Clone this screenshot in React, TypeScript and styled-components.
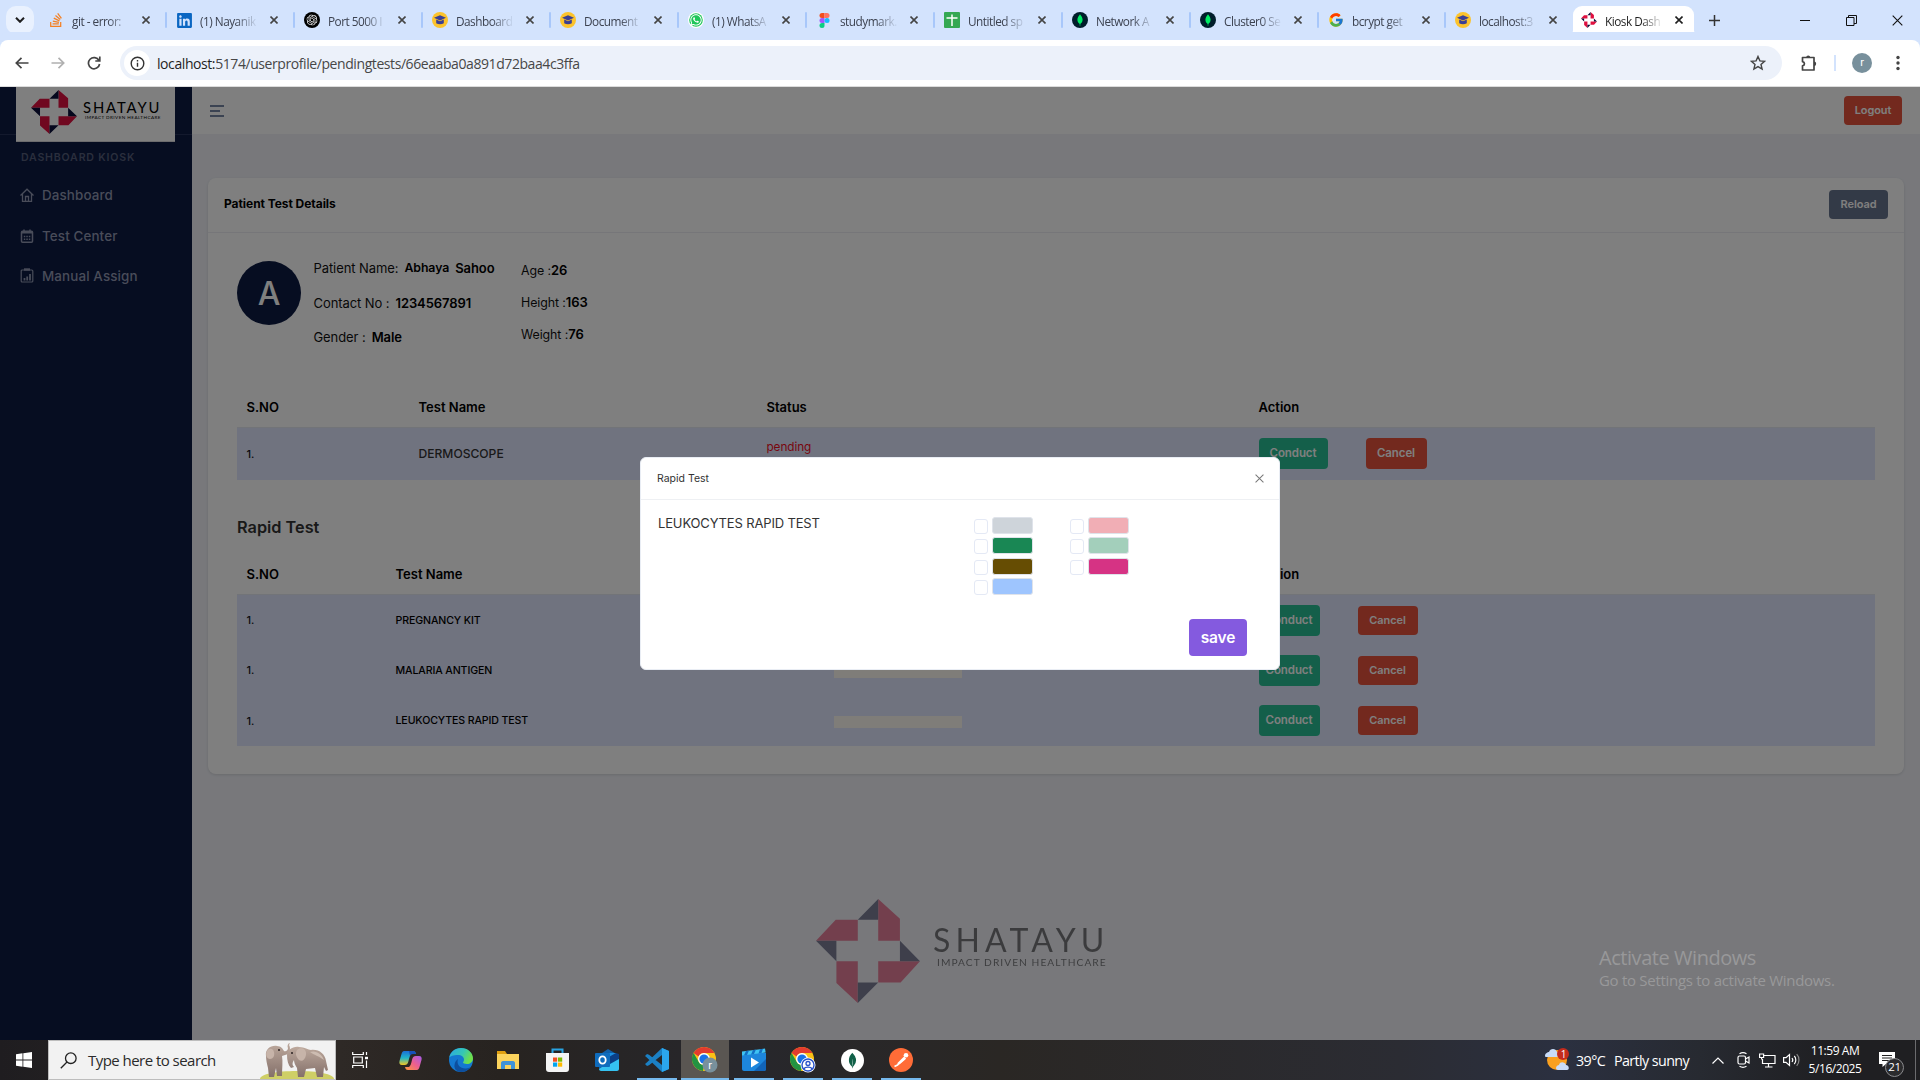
import React from "react";
import styled, { createGlobalStyle, css } from "styled-components";
import { FcGoogle } from "react-icons/fc";
import { FaLinkedin, FaWhatsapp, FaStackOverflow } from "react-icons/fa";
import { SiOpenai, SiMongodb } from "react-icons/si";

const ui = `Inter, "Liberation Sans", sans-serif`;
const sys = `"Open Sans", "Noto Sans", sans-serif`;

const Global = createGlobalStyle`
  *, *::before, *::after { box-sizing: border-box; }
  body { margin: 0; overflow: hidden; font-family: ${ui}; }
  svg { display: block; flex: none; }
`;

const Screen = styled.div`
  width: 1920px;
  height: 1080px;
  display: flex;
  flex-direction: column;
  overflow: hidden;
  background: #fff;
`;

/* ---------- browser chrome ---------- */

const TabStrip = styled.div`
  height: 40px;
  flex: none;
  display: flex;
  background: #d3e3fd;
  font-family: ${sys};
`;
const TabSearch = styled.div`
  width: 28px;
  height: 28px;
  margin: 6px 5px 0 6px;
  border-radius: 10px;
  background: #e9f1fe;
  display: grid;
  place-items: center;
`;
const Tab = styled.div<{ $w?: number; $sep?: boolean }>`
  width: ${(p) => p.$w ?? 128}px;
  height: 40px;
  display: flex;
  align-items: center;
  padding-left: 9px;
  &::after {
    content: "";
    width: 2px;
    height: 16px;
    margin-left: auto;
    border-radius: 1px;
    background: ${(p) => (p.$sep ? "#a8c7fa" : "transparent")};
  }
`;
const ActiveTab = styled.div`
  position: relative;
  width: 121px;
  height: 34px;
  margin-top: 6px;
  padding-left: 8px;
  padding-bottom: 6px;
  display: flex;
  align-items: center;
  background: #fff;
  border-radius: 9px 9px 0 0;
  &::before,
  &::after {
    content: "";
    position: absolute;
    bottom: 0;
    width: 10px;
    height: 10px;
  }
  &::before {
    left: -10px;
    background: radial-gradient(circle at 0 0, transparent 9.5px, #fff 10px);
  }
  &::after {
    right: -10px;
    background: radial-gradient(circle at 100% 0, transparent 9.5px, #fff 10px);
  }
`;
const Fav = styled.div`
  width: 16px;
  height: 16px;
  flex: none;
  display: grid;
  place-items: center;
`;
const TabLabel = styled.div<{ $active?: boolean }>`
  width: 60px;
  margin-left: 8px;
  padding-top: 1px;
  white-space: nowrap;
  font-size: 11.8px;
  line-height: 18px;
  letter-spacing: -0.5px;
  color: ${(p) => (p.$active ? "#1f1f1f" : "#3c4250")};
  mask-image: linear-gradient(90deg, #000 36px, transparent 58px);
`;
const CloseSlot = styled.div`
  width: 10px;
  margin-left: 10px;
`;
const NewTab = styled.div`
  width: 40px;
  display: grid;
  place-items: center;
`;
const WinButtons = styled.div`
  margin-left: auto;
  display: flex;
`;
const WinButton = styled.div`
  width: 46px;
  display: grid;
  place-items: center;
`;
const Toolbar = styled.div`
  height: 47px;
  flex: none;
  display: flex;
  align-items: center;
  border-radius: 8px 8px 0 0;
  border-bottom: 1px solid #dcdcdc;
  background: #fff;
  box-shadow: 0 -8px 0 #d3e3fd;
  z-index: 0;
`;
const NavIcon = styled.div`
  width: 36px;
  display: grid;
  place-items: center;
`;
const NavIcons = styled.div`
  width: 120px;
  padding-left: 4px;
  display: flex;
`;
const Omnibox = styled.div`
  width: 1662px;
  height: 34px;
  border-radius: 17px;
  padding: 0 16px 0 4px;
  display: flex;
  align-items: center;
  background: #ecf1fa;
`;
const InfoDisc = styled.div`
  width: 26px;
  height: 26px;
  border-radius: 50%;
  display: grid;
  place-items: center;
  background: #fff;
`;
const Url = styled.div`
  margin-left: 7px;
  flex: 1;
  font-family: ${sys};
  font-size: 14px;
  letter-spacing: -0.42px;
  color: #474747;
  b {
    font-weight: 400;
    color: #1f1f1f;
  }
`;
const ToolIcons = styled.div`
  display: flex;
  align-items: center;
  padding-left: 18px;
`;
const ToolSep = styled.div`
  width: 2px;
  height: 16px;
  margin: 0 16px 0 16px;
  background: #d3e3fd;
`;
const Profile = styled.div`
  width: 20px;
  height: 20px;
  margin-right: 24px;
  border-radius: 50%;
  display: grid;
  place-items: center;
  background: #78909c;
  color: #fff;
  font: 11px/18px Roboto, sans-serif;
`;

/* ---------- application ---------- */

const Page = styled.div`
  position: relative;
  height: 953px;
  flex: none;
  display: flex;
  background: #f0f1f7;
  overflow: hidden;
`;
const Sidebar = styled.div`
  width: 192px;
  flex: none;
  background: #0c1a42;
`;
const SideHead = styled.div`
  height: 47.5px;
  padding: 0 16px;
  border-bottom: 1px solid #26335a;
`;
const SideLogo = styled.div`
  position: relative;
  width: 159px;
  height: 54.5px;
  padding: 3px 0 0 15px;
  display: flex;
  background: #fff;
  border-bottom: 1px solid #d8d9dd;
`;
const SideCaption = styled.div`
  padding: 15px 0 0 21px;
  height: 46px;
  font-size: 10.6px;
  line-height: 16px;
  font-weight: 600;
  letter-spacing: 0.8px;
  color: #555e7b;
`;
const SideItem = styled.div`
  height: 40.4px;
  display: flex;
  align-items: center;
  gap: 8px;
  padding-left: 20px;
  font-size: 13.4px;
  font-weight: 500;
  letter-spacing: 0.12px;
  color: #9299b3;
`;
const SideItems = styled.div`
  padding-top: 0;
  margin-top: -5.5px;
`;
const Main = styled.div`
  flex: 1;
  display: flex;
  flex-direction: column;
`;
const TopBar = styled.div`
  height: 47px;
  display: flex;
  align-items: center;
  justify-content: space-between;
  padding: 0 18px 0 18px;
  background: #fff;
`;
const Button = styled.div<{ $bg: string; $w: number; $h?: number; $fs?: number; $ml?: number }>`
  width: ${(p) => p.$w}px;
  height: ${(p) => p.$h ?? 29}px;
  margin-left: ${(p) => p.$ml ?? 0}px;
  padding-bottom: 1px;
  border-radius: 4px;
  display: grid;
  place-items: center;
  background: ${(p) => p.$bg};
  color: #fff;
  font-size: ${(p) => p.$fs ?? 11}px;
  font-weight: 600;
  letter-spacing: -0.1px;
`;
const Card = styled.div`
  width: 1696px;
  height: 596px;
  margin: 44px 0 0 16px;
  border-radius: 8px;
  background: #fff;
  box-shadow: 0 1px 3px rgba(0, 0, 0, 0.12);
`;
const CardHead = styled.div`
  height: 55px;
  display: flex;
  align-items: center;
  justify-content: space-between;
  padding: 0 16px 2px;
  border-bottom: 1px solid #ededf2;
  font-size: 12px;
  font-weight: 700;
  letter-spacing: -0.05px;
  color: #000;
  > span {
    padding-bottom: 2px;
  }
`;
const CardBody = styled.div`
  padding: 28px 29px 0;
`;
const Patient = styled.div`
  height: 121px;
  display: flex;
`;
const Avatar = styled.div`
  width: 64px;
  height: 64px;
  border-radius: 50%;
  display: grid;
  place-items: center;
  background: #0c1a42;
  color: #fff;
  font-size: 32px;
  font-weight: 500;
`;
const Facts = styled.div<{ $w: number; $ml: number; $row: number; $gap: number; $fs: number; $top: number }>`
  width: ${(p) => p.$w}px;
  margin: ${(p) => p.$top}px 0 0 ${(p) => p.$ml}px;
  display: grid;
  grid-auto-rows: ${(p) => p.$row}px;
  align-content: start;
  font-size: ${(p) => p.$fs}px;
  letter-spacing: -0.08px;
  color: #111;
  > div {
    display: flex;
    align-items: center;
    gap: ${(p) => p.$gap}px;
  }
  b {
    font-weight: 600;
    font-size: 13px;
    color: #000;
  }
  b.first {
    font-size: 12.3px;
    padding-bottom: 1px;
  }
`;
const cols = css<{ $cols: string }>`
  display: grid;
  grid-template-columns: ${(p) => p.$cols};
  align-items: center;
  padding-left: 9.5px;
`;
const HeadRow = styled.div<{ $cols: string; $h: number; $pt: number }>`
  ${cols}
  height: ${(p) => p.$h}px;
  padding-top: ${(p) => p.$pt}px;
  font-size: 13px;
  font-weight: 600;
  color: #000;
  border-bottom: 1px solid #e4e8f0;
`;
const Row = styled.div<{ $cols: string; $h: number; $fs: number }>`
  ${cols}
  height: ${(p) => p.$h}px;
  font-size: ${(p) => p.$fs}px;
  font-weight: 500;
  color: #15171c;
  background: #e0e6ff;
`;
const TestName = styled.div`
  font-size: 12.1px;
  padding-bottom: 1px;
  color: #333;
`;
const Small = styled.div`
  font-size: 10.6px;
  letter-spacing: -0.12px;
  color: #000;
`;
const Pending = styled.div`
  padding-bottom: 13px;
  font-size: 11.8px;
  letter-spacing: -0.1px;
  font-weight: 400;
  color: #f00d1c;
`;
const Actions = styled.div`
  display: flex;
  align-items: center;
`;
const SectionTitle = styled.div`
  height: 66px;
  padding: 35px 0 0;
  font-size: 16.3px;
  line-height: 24px;
  font-weight: 600;
  color: #333;
`;
const Meter = styled.div`
  width: 128px;
  height: 12px;
  margin: 3px 0 0 38px;
  background: #fffaf2;
`;
const Brand = styled.div`
  display: flex;
  margin: 124.5px 0 0 624px;
  opacity: 0.5;
`;
const BrandText = styled.div<{ $size: number; $ls: number; $sub: number; $subLs: number; $ml: number; $mt: number; $gap: number; $indent: number }>`
  margin: ${(p) => p.$mt}px 0 0 ${(p) => p.$ml}px;
  display: flex;
  flex-direction: column;
  gap: ${(p) => p.$gap}px;
  font-family: Lato, sans-serif;
  color: #000;
  white-space: nowrap;
  font-size: ${(p) => p.$size}px;
  line-height: 1;
  letter-spacing: ${(p) => p.$ls}px;
  small {
    font-size: ${(p) => p.$sub}px;
    line-height: 1;
    padding-left: ${(p) => p.$indent}px;
    letter-spacing: ${(p) => p.$subLs}px;
  }
`;

/* ---------- modal ---------- */

const Backdrop = styled.div`
  position: absolute;
  inset: 0;
  background: rgba(0, 0, 0, 0.5);
`;
const Modal = styled.div`
  position: absolute;
  left: 640px;
  top: 370px;
  width: 640px;
  height: 213px;
  border-radius: 6px;
  background: #fff;
  border: 1px solid #e9edf4;
`;
const ModalHead = styled.div`
  height: 42px;
  display: flex;
  align-items: center;
  justify-content: space-between;
  padding: 0 15.5px 1px 16px;
  border-bottom: 1px solid #eef0f3;
  font-size: 10.5px;
  color: #333;
`;
const ModalBody = styled.div`
  height: 119px;
  display: grid;
  grid-template-columns: 316px 96px 1fr;
  padding: 16px 0 0 17px;
  font-size: 13px;
  color: #333;
`;
const ModalName = styled.div`
  margin-top: -1px;
  line-height: 16px;
  letter-spacing: -0.15px;
`;
const Choices = styled.div`
  display: grid;
  grid-auto-rows: 20.5px;
  align-content: start;
`;
const Choice = styled.label`
  display: flex;
  align-items: flex-start;
  gap: 4px;
`;
const Check = styled.span`
  width: 14px;
  height: 15px;
  margin-top: 2.7px;
  border: 1px solid #e4e9f5;
  border-radius: 3px;
`;
const Swatch = styled.span<{ $c: string }>`
  width: 40.5px;
  height: 17px;
  margin-top: 0.6px;
  border: 1px solid #dfe3ea;
  border-radius: 3px;
  background: ${(p) => p.$c};
`;
const ModalFoot = styled.div`
  display: flex;
  justify-content: flex-end;
  padding-right: 32px;
`;
const Watermark = styled.div`
  position: absolute;
  left: 1599px;
  top: 857px;
  font-family: ${sys};
  color: #98989a;
  white-space: nowrap;
  font-size: 20px;
  line-height: 28px;
  letter-spacing: -0.45px;
  small {
    display: block;
    margin-top: -1px;
    font-size: 15px;
    line-height: 18px;
    letter-spacing: -0.29px;
  }
`;

/* ---------- taskbar ---------- */

const Taskbar = styled.div`
  height: 40px;
  flex: none;
  display: flex;
  background: linear-gradient(90deg, #1f1d20 0, #2e2926 340px, #272320 500px, #27272c 740px, #2a2724 1000px, #2b2c33 1400px, #2b3040 1560px, #272a31 1700px, #1f1f22 1830px, #1f1f22);
  color: #fff;
  font-family: ${sys};
`;
const StartSlot = styled.div`
  width: 48px;
  display: grid;
  place-items: center;
`;
const SearchBox = styled.div`
  width: 288px;
  height: 40px;
  display: flex;
  align-items: center;
  padding-left: 11px;
  border: 1px solid #bdbdbd;
  background: #f2f2f2;
  color: #2b2b2b;
  font-size: 15px;
  letter-spacing: -0.54px;
  > span {
    width: 171px;
    margin-left: 11px;
  }
`;
const TaskSlot = styled.div<{ $w?: number; $active?: boolean; $line?: boolean }>`
  width: ${(p) => p.$w ?? 49}px;
  height: 40px;
  display: grid;
  place-items: center;
  background: ${(p) =>
    p.$line
      ? `linear-gradient(#76b9ed, #76b9ed) center bottom / ${p.$active ? "100%" : "40px"} 2px no-repeat${p.$active ? ", #5a5652" : ""}`
      : "none"};
`;
const Tray = styled.div`
  margin-left: auto;
  display: flex;
  align-items: center;
  font-size: 14.3px;
`;
const Temp = styled.div<{ $w: number; $ls: number }>`
  width: ${(p) => p.$w}px;
  letter-spacing: ${(p) => p.$ls}px;
  white-space: nowrap;
`;
const TrayIcon = styled.div<{ $w: number }>`
  width: ${(p) => p.$w}px;
  display: grid;
  place-items: center;
`;
const Clock = styled.div`
  width: 64px;
  padding-right: 6px;
  text-align: center;
  font-size: 12px;
  line-height: 18px;
  letter-spacing: -0.45px;
  white-space: nowrap;
`;
const Badge = styled.div`
  position: relative;
  width: 46px;
  height: 40px;
  margin-right: 4px;
  border-right: 1px solid #6b6b6e;
  > svg {
    margin: 11px 0 0 9px;
  }
  > span {
    position: absolute;
    left: 15px;
    top: 18px;
    width: 19px;
    height: 19px;
    border-radius: 50%;
    border: 1px solid #8b8b8e;
    background: #2b2b2d;
    font-size: 11.5px;
    line-height: 16px;
    text-align: center;
    letter-spacing: -0.4px;
  }
`;

/* ---------- drawings ---------- */

const Mark = ({ w, h = w, red = "#e01040", navy = "#0a0f3a" }: { w: number; h?: number; red?: string; navy?: string }) => (
  <svg width={w} height={h} viewBox="48 56 311 311" preserveAspectRatio="none">
    <path fill={red} d="M234 56l65 59v66h-65zM48 181l59-63h66v63zM109 242h64v125l-64-60zM234 242h125l-58 64h-67z" />
    <path fill={navy} d="M234 56v62h-61zM48 181h61v61zM173 306h61l-61 61zM299 181l60 61h-60z" />
  </svg>
);

const Cross = ({ s = 8, c = "#444", sw = 1.6 }) => (
  <svg width={s} height={s} viewBox="0 0 8 8" stroke={c} strokeWidth={sw}>
    <path d="M.5.5l7 7M7.5.5l-7 7" />
  </svg>
);

const Cap = () => (
  <svg width="16" height="16" viewBox="0 0 16 16">
    <circle cx="8" cy="8" r="8" fill="#fcc32c" />
    <path fill="#3a3f94" d="M8 3.2l6 2.6-6 2.7-6-2.7zM4.2 7.6L8 9.3l3.8-1.7v3.6c-2.2 1.5-5.4 1.5-7.6 0z" />
  </svg>
);
const Leaf = () => (
  <svg width="16" height="16" viewBox="0 0 16 16">
    <circle cx="8" cy="8" r="8" fill="#001e2b" />
    <path fill="#00ed64" d="M8 2.2c1.6 2 2.6 3.600 2.600 5.600S9.200 11.400 8.300 12v1.800h-.6V12c-.9-.6-2.300-2.200-2.300-4.200S6.400 4.200 8 2.200z" />
  </svg>
);
const OpenAiFav = () => (
  <svg width="16" height="16" viewBox="0 0 16 16">
    <circle cx="8" cy="8" r="8" fill="#000" />
    <SiOpenai x="2.500" y="2.500" size={11} color="#fff" />
  </svg>
);
const WhatsFav = () => (
  <svg width="16" height="16" viewBox="0 0 16 16">
    <circle cx="8" cy="8" r="8" fill="#fff" />
    <circle cx="8" cy="8" r="6.800" fill="#1fc659" />
    <FaWhatsapp x="1.500" y="1.500" size={13} color="#fff" />
  </svg>
);
const FigmaFav = () => (
  <svg width="11" height="15" viewBox="0 0 10 15">
    <path fill="#f24e1e" d="M5 0H2.500a2.500 2.500 0 000 5H5z" />
    <path fill="#ff7262" d="M5 0h2.500a2.500 2.500 0 010 5H5z" />
    <path fill="#a259ff" d="M5 5H2.500a2.500 2.500 0 000 5H5z" />
    <circle cx="7.500" cy="7.500" r="2.500" fill="#1abcfe" />
    <path fill="#0acf83" d="M5 10H2.500A2.500 2.500 0 105 12.500z" />
  </svg>
);
const SheetFav = () => (
  <svg width="16" height="16" viewBox="0 0 16 16">
    <rect width="16" height="16" rx="1" fill="#34a853" />
    <path stroke="#fff" strokeWidth="1.500" d="M2.500 6h11M8 2.500v11.500" />
  </svg>
);

const ChromeLogo = () => (
  <>
    <circle cx="12" cy="12" r="12" fill="#fbc116" />
    <path fill="#e33b2e" d="M12 0a12 12 0 0110.400 6H12a6 6 0 00-5.400 3.400L1.600 6A12 12 0 0112 0z" />
    <path fill="#229342" d="M1.600 6l5.200 9a6 6 0 005.200 3l-1 6A12 12 0 011.600 6z" />
    <circle cx="12" cy="12" r="6" fill="#fff" />
    <circle cx="12" cy="12" r="4.600" fill="#1a73e8" />
  </>
);

const Elephants = () => (
  <svg width="76" height="37" viewBox="0 0 76 37">
    <defs>
      <linearGradient id="hide" x1="0" y1="0" x2="0" y2="1">
        <stop offset="0" stopColor="#bda99d" />
        <stop offset="1" stopColor="#84706a" />
      </linearGradient>
    </defs>
    <path fill="#cfcf66" d="M1 37c0-5 16-8 37-8s37 3 37 8z" />
    <path fill="url(#hide)" d="M7 14c-1-7 5-11 11-10 4 0 6 3 7 5 2 1 4-1 4-3-1-2 0-5 2-5l-1 2c2 3 1 9-4 10l-3 1c1 6 0 12 0 20h-5l-1-8-2 9h-5l-1-9c-1-4-2-8-2-12z" />
    <path fill="url(#hide)" d="M28 13c0-5 6-9 12-8 6 0 9 3 12 3 8-1 14 4 15 11l2 9-2 1-2-4-1 10h-6l-2-9-9 1-2 8h-6l-1-9c-2-3-3-6-3-8-2 3-2 5 0 7l-3 1c-3-3-4-8-4-13z" />
    <path fill="#c7b4a9" d="M38 8c4-4 10-1 9 5-1 5-4 7-7 5-3-3-4-7-2-10zM8 9c2-3 6-3 7 1s-1 7-4 7-5-4-3-8z" />
    <path fill="#cdbcb1" d="M51 10c6-2 12 2 14 8-5-4-10-5-14-8z" />
    <circle cx="20" cy="8" r="1" fill="#2b2220" />
    <circle cx="33" cy="11" r="1" fill="#2b2220" />
  </svg>
);

const tabs: [React.ReactNode, string, number?][] = [
  [<FaStackOverflow key="s" size={16} color="#f48024" />, "git - error:"],
  [<FaLinkedin key="l" size={17} color="#0a66c2" />, "(1) Nayanik"],
  [<OpenAiFav key="o" />, "Port 5000 I"],
  [<Cap key="c" />, "Dashboard"],
  [<Cap key="c" />, "Document"],
  [<WhatsFav key="w" />, "(1) WhatsA"],
  [<FigmaFav key="f" />, "studymark."],
  [<SheetFav key="s" />, "Untitled sp"],
  [<Leaf key="m" />, "Network A"],
  [<Leaf key="m" />, "Cluster0 Se"],
  [<FcGoogle key="g" size={16} />, "bcrypt get", 127],
  [<Cap key="c" />, "localhost:3", 127],
];

const T1 = "172px 348px 492px 1fr";
const T2 = "149px 400px 463px 1fr";
const rapid = ["PREGNANCY KIT", "MALARIA ANTIGEN", "LEUKOCYTES RAPID TEST"];
const GREEN = "#28bf94";
const RED = "#e6533c";

export default function App() {
  return (
    <Screen>
      <Global />
      <TabStrip>
        <TabSearch>
          <svg width="10" height="6" viewBox="0 0 10 6" fill="none" stroke="#1f1f1f" strokeWidth="2"><path d="M1 .8l4 4 4-4" /></svg>
        </TabSearch>
        {tabs.map(([icon, label, w], i) => (
          <Tab key={i} $w={w} $sep={i < 11}>
            <Fav>{icon}</Fav>
            <TabLabel>{label}</TabLabel>
            <CloseSlot><Cross /></CloseSlot>
          </Tab>
        ))}
        <ActiveTab>
          <Fav><Mark w={16} /></Fav>
          <TabLabel $active>Kiosk Dash</TabLabel>
          <CloseSlot><Cross c="#1f1f1f" /></CloseSlot>
        </ActiveTab>
        <NewTab>
          <svg width="11" height="11" viewBox="0 0 11 11" stroke="#333" strokeWidth="1.500"><path d="M5.500 0v11M0 5.500h11" /></svg>
        </NewTab>
        <WinButtons>
          <WinButton><svg width="10" height="10"><path d="M0 5.500h10" stroke="#111" /></svg></WinButton>
          <WinButton>
            <svg width="11" height="11" fill="none" stroke="#111"><path d="M.5 2.500h7.500v8H.5zM2.500 2.500v-2h8v8H8" /></svg>
          </WinButton>
          <WinButton><Cross s={11} c="#111" sw={0.8} /></WinButton>
        </WinButtons>
      </TabStrip>

      <Toolbar>
        <NavIcons>
          <NavIcon><svg width="14" height="12" viewBox="0 0 14 12" fill="none" stroke="#444" strokeWidth="1.700"><path d="M13.500 6H1.500M6.500 .8L1.300 6l5.200 5.200" /></svg></NavIcon>
          <NavIcon><svg width="14" height="12" viewBox="0 0 14 12" fill="none" stroke="#b0b0b0" strokeWidth="1.700"><path d="M.5 6h12M7.500 .8L12.700 6l-5.200 5.200" /></svg></NavIcon>
          <NavIcon><svg width="14" height="14" viewBox="0 0 14 14" fill="none" stroke="#444" strokeWidth="1.700"><path d="M12 4.500A5.600 5.600 0 1012.600 8M12.800 .5v4.500H8.300" /></svg></NavIcon>
        </NavIcons>
        <Omnibox>
          <InfoDisc>
            <svg width="15" height="15" viewBox="0 0 15 15" fill="none" stroke="#333" strokeWidth="1.400"><circle cx="7.500" cy="7.500" r="6.300" /><path d="M7.500 6.700v4M7.500 4v1.500" /></svg>
          </InfoDisc>
          <Url><b>localhost:</b>5174/userprofile/pendingtests/66eaaba0a891d72baa4c3ffa</Url>
          <svg width="16" height="16" viewBox="0 0 16 16" fill="none" stroke="#444" strokeWidth="1.400"><path d="M8 1.500l1.900 4.400 4.700.4-3.600 3.100 1.100 4.700L8 11.600l-4.100 2.500L5 9.400 1.400 6.300l4.700-.4z" /></svg>
        </Omnibox>
        <ToolIcons>
          <svg width="18" height="18" viewBox="0 0 18 18"><path fill="none" stroke="#444" strokeWidth="1.700" strokeLinejoin="round" d="M2.500 3.500h11.500v12.500H2.500v-4.200c2.600-.4 2.600-3.700 0-4.100z" /><path fill="#444" d="M6.200 3.500a2 2 0 014 0zM14 7.500a2.200 2.200 0 010 4.400z" /></svg>
          <ToolSep />
          <Profile>r</Profile>
          <svg width="4" height="16" viewBox="0 0 4 16" fill="#444"><circle cx="2" cy="2.500" r="1.700" /><circle cx="2" cy="8" r="1.700" /><circle cx="2" cy="13.500" r="1.700" /></svg>
        </ToolIcons>
      </Toolbar>

      <Page>
        <Sidebar>
          <SideHead>
            <SideLogo>
              <Mark w={46} h={44} />
              <BrandText $size={14.8} $ls={1.9} $sub={4.6} $subLs={0.45} $ml={6} $mt={10} $gap={0.5} $indent={2}>
                SHATAYU<small>IMPACT DRIVEN HEALTHCARE</small>
              </BrandText>
            </SideLogo>
          </SideHead>
          <SideCaption>DASHBOARD KIOSK</SideCaption>
          <SideItems>
            <SideItem>
              <svg width="14" height="14" viewBox="0 0 14 14" fill="none" stroke="currentColor" strokeWidth="1.300"><path d="M.5 7.500L7 1.200l6.500 6.300M2.500 6v7.300h9V6" /><path d="M5.500 13V8.500h3V13" /></svg>
              Dashboard
            </SideItem>
            <SideItem>
              <svg width="14" height="14" viewBox="0 0 14 14" fill="none" stroke="currentColor" strokeWidth="1.500"><rect x="1.500" y="2.200" width="11" height="11" rx="1" /><path d="M1.500 3.700h11M4 .5v3M10 .5v3" /><path d="M3.800 7.500h6.600M3.800 10.300h6.600" strokeDasharray="1.500 1" /></svg>
              Test Center
            </SideItem>
            <SideItem>
              <svg width="14" height="15" viewBox="0 0 14 15" fill="none" stroke="currentColor" strokeWidth="1.200"><rect x="1.200" y="2" width="11.600" height="12" rx="1" /><path d="M4 1.500h6" strokeWidth="2.400" /><path d="M4.500 12.500v-2.500M7.200 12.500V8.500M10 12.500V6" strokeWidth="1.800" /></svg>
              Manual Assign
            </SideItem>
          </SideItems>
        </Sidebar>

        <Main>
          <TopBar>
            <svg width="14" height="12" viewBox="0 0 14 12" stroke="#4b5f86" strokeWidth="1.300"><path d="M0 1h14M0 6h10M0 11h14" /></svg>
            <Button $bg={RED} $w={58}>Logout</Button>
          </TopBar>
          <Card>
            <CardHead>
              <span>Patient Test Details</span>
              <Button $bg="#67748e" $w={59}>Reload</Button>
            </CardHead>
            <CardBody>
              <Patient>
                <Avatar>A</Avatar>
                <Facts $w={195} $ml={12.5} $row={34.5} $gap={6} $fs={13} $top={-10}>
                  <div>Patient Name: <b className="first">Abhaya</b> <b>Sahoo</b></div>
                  <div>Contact No : <b>1234567891</b></div>
                  <div>Gender : <b>Male</b></div>
                </Facts>
                <Facts $w={200} $ml={12.5} $row={32} $gap={0} $fs={12.4} $top={-7}>
                  <div>Age :<b>26</b></div>
                  <div>Height :<b>163</b></div>
                  <div>Weight :<b>76</b></div>
                </Facts>
              </Patient>
              <HeadRow $cols={T1} $h={46} $pt={5}>
                <div>S.NO</div><div>Test Name</div><div>Status</div><div>Action</div>
              </HeadRow>
              <Row $cols={T1} $h={51.5} $fs={11}>
                <div>1.</div>
                <TestName>DERMOSCOPE</TestName>
                <Pending>pending</Pending>
                <Actions>
                  <Button $bg={GREEN} $w={69} $h={31} $fs={11.5}>Conduct</Button>
                  <Button $bg={RED} $w={61} $h={31} $fs={11.5} $ml={38}>Cancel</Button>
                </Actions>
              </Row>
              <SectionTitle>Rapid Test</SectionTitle>
              <HeadRow $cols={T2} $h={49.5} $pt={8}>
                <div>S.NO</div><div>Test Name</div><div>Status</div><div>Action</div>
              </HeadRow>
              {rapid.map((name) => (
                <Row key={name} $cols={T2} $h={50.3} $fs={11}>
                  <div>1.</div>
                  <Small>{name}</Small>
                  <Meter />
                  <Actions>
                    <Button $bg={GREEN} $w={61} $h={31} $fs={11.5}>Conduct</Button>
                    <Button $bg={RED} $w={60} $fs={11} $ml={38}>Cancel</Button>
                  </Actions>
                </Row>
              ))}
            </CardBody>
          </Card>
          <Brand>
            <Mark w={104} />
            <BrandText $size={32} $ls={5.1} $sub={10.2} $subLs={1.05} $ml={13} $mt={25.5} $gap={1} $indent={4}>
              SHATAYU<small>IMPACT DRIVEN HEALTHCARE</small>
            </BrandText>
          </Brand>
        </Main>

        <Backdrop />
        <Watermark>Activate Windows<small>Go to Settings to activate Windows.</small></Watermark>
        <Modal>
          <ModalHead>
            Rapid Test
            <Cross s={9} c="#777" sw={0.9} />
          </ModalHead>
          <ModalBody>
            <ModalName>LEUKOCYTES RAPID TEST</ModalName>
            <Choices>
              {["#ced4da", "#198754", "#664d03", "#9ec5fe"].map((c) => (
                <Choice key={c}><Check /><Swatch $c={c} /></Choice>
              ))}
            </Choices>
            <Choices>
              {["#f1aeb5", "#a3cfbb", "#d63384"].map((c) => (
                <Choice key={c}><Check /><Swatch $c={c} /></Choice>
              ))}
            </Choices>
          </ModalBody>
          <ModalFoot>
            <Button $bg="#845adf" $w={58} $h={37} $fs={15.5}>save</Button>
          </ModalFoot>
        </Modal>
      </Page>

      <Taskbar>
        <StartSlot>
          <svg width="16" height="16" viewBox="0 0 16 16" fill="#fff"><path d="M0 2.200L6.500 1.300V7.600H0zM7.300 1.200L16 0v7.600H7.300zM0 8.400h6.500v6.300L0 13.800zM7.300 8.400H16V16l-8.700-1.200z" /></svg>
        </StartSlot>
        <SearchBox>
          <svg width="17" height="17" viewBox="0 0 17 17" fill="none" stroke="#222" strokeWidth="1.300"><circle cx="10.800" cy="6.200" r="5.300" /><path d="M7 10L.8 16.200" /></svg>
          <span>Type here to search</span>
          <Elephants />
        </SearchBox>
        <TaskSlot $w={48}>
          <svg width="17" height="16" viewBox="0 0 17 16" fill="none" stroke="#fff" strokeWidth="1.200"><path d="M.7 0v2.500h10.600V0M.7 16v-2.500h10.600V16M1.700 5h8.600v6H1.700zM14.500 0v3M14.500 8.500V16" /><path d="M13 6h3" strokeWidth="2.400" /></svg>
        </TaskSlot>
        <TaskSlot $w={53}>
          <svg width="23" height="21" viewBox="0 0 23 21">
            <defs>
              <linearGradient id="cp1" x1="0" y1="0" x2="0" y2="1"><stop offset="0" stopColor="#1a6fd8" /><stop offset=".5" stopColor="#21b6c8" /><stop offset="1" stopColor="#f3c623" /></linearGradient>
              <linearGradient id="cp2" x1="1" y1="0" x2="0" y2="1"><stop offset="0" stopColor="#a45bea" /><stop offset=".5" stopColor="#ef5f8d" /><stop offset="1" stopColor="#fb9a3c" /></linearGradient>
            </defs>
            <path fill="url(#cp1)" d="M5 1h9c2 0 2.500 1 3 3l-5 0c-1 1-1.500 3-2.500 7-.6 2.500-1.500 4-4 4H3c-2.500 0-3-2-2.500-4L2.500 4C3 2 4 1 5 1z" />
            <path fill="#1750b8" d="M10 1h4c2 0 2.500 1 3 3h-3c-2 0-3 1-3 2z" />
            <path fill="url(#cp2)" d="M18 20H9c-2 0-2.500-1-3-3h4c1.500-1 2-3 3-7 .6-2.500 1.500-4 4-4h3c2.500 0 3 2 2.500 4l-2 7c-.5 2-1.500 3-2.500 3z" />
          </svg>
        </TaskSlot>
        <TaskSlot $w={47}>
          <svg width="24" height="24" viewBox="0 0 24 24">
            <defs>
              <linearGradient id="eg" x1="0" y1="0" x2="1" y2=".4"><stop offset="0" stopColor="#2aa8e6" /><stop offset=".6" stopColor="#35c7b5" /><stop offset="1" stopColor="#6fe04a" /></linearGradient>
            </defs>
            <circle cx="12" cy="12" r="12" fill="#1478d0" />
            <path fill="url(#eg)" d="M.2 10C1 4 6 0 12 0c7 0 12 5 12 10.500 0 3.500-3 5.500-6 5.500-2.500 0-4-.8-4-1.500s1-1.200 1-3C15 9 12.500 7 9 7 4.500 7 1 8 .2 10z" />
            <path fill="#0d4f9e" d="M9 11c-2 6 3 10 8 9.500 2 0 3.500-1 4.500-1.500-2 3-5.500 5-9.500 5-5 0-7-4-6.500-7 .2-3 2-5 3.500-6z" />
          </svg>
        </TaskSlot>
        <TaskSlot>
          <svg width="23" height="19" viewBox="0 0 23 19"><path fill="#e0a010" d="M0 0h8l2 3H0z" /><path fill="#fbd35c" d="M0 3h22v15H0z" /><path fill="#3f93d8" d="M4 18v-6c0-1 .7-2 2-2h10c1.300 0 2 1 2 2v6h-4v-4H8v4z" /></svg>
        </TaskSlot>
        <TaskSlot>
          <svg width="23" height="24" viewBox="0 0 23 24"><path fill="none" stroke="#29a3e2" strokeWidth="2" d="M6.500 6V1.500h10V6" /><path fill="#f4f4f4" d="M0 5h23v16c0 2-1 3-3 3H3c-2 0-3-1-3-3z" /><path fill="#f25022" d="M7 9.500h4.200v4.200H7z" /><path fill="#7fba00" d="M12 9.500h4.200v4.200H12z" /><path fill="#00a4ef" d="M7 14.500h4.200v4.200H7z" /><path fill="#ffb900" d="M12 14.500h4.200v4.200H12z" /></svg>
        </TaskSlot>
        <TaskSlot $w={50}>
          <svg width="25" height="22" viewBox="0 0 25 22"><path fill="#0f5ea8" d="M4 6l9-6 10 6v14H4z" /><path fill="#1b8fe0" d="M6 4h15v10H6z" /><path fill="#35c2f1" d="M24 7v13c0 1-1 2-2 2H6c-1 0-2-1-2-2z" /><path fill="#0b3f86" d="M24 5v5l-9 5-3-6 9-5z" /><rect y="4" width="15" height="14" rx="1" fill="#0f6cbd" /><ellipse cx="7.500" cy="11" rx="3.200" ry="3.600" fill="none" stroke="#fff" strokeWidth="1.800" /></svg>
        </TaskSlot>
        <TaskSlot $line>
          <svg width="24" height="24" viewBox="0 0 24 24"><path fill="#1b80c4" d="M17 0l7 3v18l-7 3L1.500 9.300 0 8l2-2 2 .8L17 17V7L4 17.200 2 18l-2-2 1.500-1.300z" /><path fill="#2ba6ee" d="M17 0l7 3v18l-7 3z" /></svg>
        </TaskSlot>
        <TaskSlot $line $active $w={48}>
          <svg width="26" height="26" viewBox="0 0 26 26"><ChromeLogo /><circle cx="18" cy="18" r="7.500" fill="#78909c" /><text x="16.300" y="21.500" fill="#fff" fontSize="11" fontFamily="Roboto">r</text></svg>
        </TaskSlot>
        <TaskSlot $line $w={50}>
          <svg width="24" height="24" viewBox="0 0 24 24"><path fill="#1d86dc" d="M0 5h24v16c0 1-1 2-2 2H2c-1 0-2-1-2-2z" /><path fill="#1264b8" d="M12 23L24 11v10c0 1-1 2-2 2z" /><path fill="#3fc3f3" d="M0 3.500L23 .5l.7 4L0 7.500z" /><path fill="#1470c4" d="M4 3l3-.4L5 7l-3 .3zM11 2l3-.4-2 4.500-3 .4zM18 1.200l3-.4L19.500 5l-3 .4z" /><path fill="#fff" d="M9 9.500l8 5-8 5z" /></svg>
        </TaskSlot>
        <TaskSlot $line $w={48}>
          <svg width="26" height="26" viewBox="0 0 26 26"><ChromeLogo /><circle cx="18" cy="18" r="7.500" fill="#fff" /><circle cx="18" cy="18" r="6" fill="none" stroke="#2752c9" strokeWidth="1.400" /><circle cx="18" cy="16.500" r="2" fill="none" stroke="#2752c9" strokeWidth="1.300" /><path d="M14 22c1-2.500 7-2.500 8 0" fill="none" stroke="#2752c9" strokeWidth="1.300" /></svg>
        </TaskSlot>
        <TaskSlot $line $w={50}>
          <svg width="23" height="23" viewBox="0 0 23 23"><circle cx="11.500" cy="11.500" r="11.500" fill="#fff" /><SiMongodb x="3.500" y="3.500" size={16} color="#116149" /></svg>
        </TaskSlot>
        <TaskSlot $line $w={48}>
          <svg width="24" height="24" viewBox="0 0 24 24"><circle cx="12" cy="12" r="12" fill="#ff6c37" /><path d="M5.500 18.500l3-1.500 7.500-7" stroke="#fff" strokeWidth="1.600" fill="none" /><path d="M8 15.500l7-7 2.200 2.200-6.500 5.500z" fill="#fff" /><circle cx="17" cy="7.200" r="2.300" fill="#fff" /></svg>
        </TaskSlot>
        <Tray>
          <TrayIcon $w={36}>
            <svg width="26" height="24" viewBox="0 0 26 24"><circle cx="12" cy="12" r="10" fill="#f9a01f" /><path fill="#c9dcf8" d="M0 8c0-3 3-4 4-4 1-4 7-4 8 0 3 0 3 4 0 5H2C1 9 0 9 0 8zM11 20c0-2 2-3 3-3 1-4 6-3 7 0 3 0 4 5 1 5H13c-1 0-2-1-2-2z" /><circle cx="18" cy="6" r="6" fill="#c42b1c" /><text x="15.800" y="9.600" fill="#fff" fontSize="10" fontFamily="Open Sans">1</text></svg>
          </TrayIcon>
          <Temp $w={38} $ls={-0.6}>39°C</Temp>
          <Temp $w={94} $ls={-0.6}>Partly sunny</Temp>
          <TrayIcon $w={20}><svg width="12" height="7" viewBox="0 0 12 7" fill="none" stroke="#fff" strokeWidth="1.200"><path d="M.5 6.500L6 1l5.500 5.500" /></svg></TrayIcon>
          <TrayIcon $w={30}><svg width="13" height="16" viewBox="0 0 13 16" fill="none" stroke="#fff" strokeWidth="1.200"><rect x="1" y="4" width="7.500" height="8" rx="1.500" /><path d="M8.500 7L12 5v6L8.500 9M2.500 1.700c2-1.200 5-1.200 7 0M2.500 14.300c2 1.200 5 1.200 7 0" /></svg></TrayIcon>
          <TrayIcon $w={18}><svg width="17" height="15" viewBox="0 0 17 15" fill="none" stroke="#fff" strokeWidth="1.200"><path d="M5 2.500h11v8H3.500V6M9.500 10.500v3M6 14h7.500" /><path d="M.6 1h4v3.500h-4zM2.600 4.500v2" /></svg></TrayIcon>
          <TrayIcon $w={30}><svg width="17" height="14" viewBox="0 0 17 14" fill="none" stroke="#fff" strokeWidth="1.200"><path d="M.6 4.700H3L6.500 1.500v11L3 9.300H.6zM9 5c.8 1 .8 3 0 4M11.300 3c2 2 2 6 0 8" /><path d="M13.700 1.200c3 3 3 8.600 0 11.600" stroke="#888" /></svg></TrayIcon>
          <Clock>11:59 AM<br />5/16/2025</Clock>
          <Badge>
            <svg width="17" height="17" viewBox="0 0 17 17"><path fill="#fff" d="M0 1h16v12H7l-3.500 3V13H0z" /><path stroke="#222" d="M3 4.500h10M3 7h10M3 9.500h10" /></svg>
            <span>21</span>
          </Badge>
        </Tray>
      </Taskbar>
    </Screen>
  );
}
